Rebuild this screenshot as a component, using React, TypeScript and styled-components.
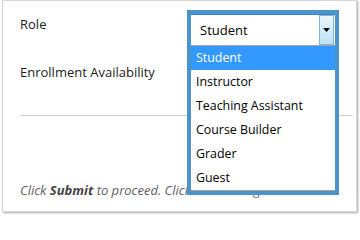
import React from 'react';
import styled, { createGlobalStyle } from 'styled-components';

const GlobalStyle = createGlobalStyle`
  html, body {
    margin: 0;
    padding: 0;
    background: #ffffff;
  }
  body {
    font-family: "Open Sans", "Noto Sans", sans-serif;
  }
`;

const roles = ['Student', 'Instructor', 'Teaching Assistant', 'Course Builder', 'Grader', 'Guest'];

const Page = styled.div`
  width: 360px;
  height: 216px;
  padding-left: 2px;
  box-sizing: border-box;
  overflow: hidden;
`;

const Panel = styled.div`
  width: 355px;
  height: 212px;
  box-sizing: border-box;
  border: 1px solid #d6d6d6;
  box-shadow: 1px 1px 2px rgba(0, 0, 0, 0.35);
  background: #fff;
  padding: 14px 3px 0 17px;
  display: flex;
  flex-direction: column;
`;

const FieldRow = styled.div`
  display: grid;
  grid-template-columns: 167px 1fr;
  height: 48px;
`;

const Label = styled.div`
  font-size: 13px;
  line-height: 18px;
  color: #222;
`;

const Control = styled.div`
  position: relative;
`;

const Divider = styled.div`
  height: 1px;
  background: #cfcfcf;
  margin-top: 4px;
`;

const Footer = styled.p`
  margin: 65px 0 0;
  font-size: 13px;
  line-height: 18px;
  font-style: italic;
  color: #5f5f66;
  white-space: nowrap;

  b {
    color: #444;
    font-weight: 700;
  }
`;

const Dropdown = styled.div`
  position: absolute;
  top: -5px;
  left: 0;
  width: 152px;
  box-sizing: border-box;
  border: 4px solid #4a93cb;
  background: #fff;
  z-index: 2;
`;

const SelectBox = styled.div`
  height: 32px;
  box-sizing: border-box;
  border-top: 1px solid #3f83bd;
  border-bottom: 1px solid #a5a5a5;
  display: flex;
  align-items: center;
  padding: 0 1px 0 9px;
  font-size: 13px;
  color: #000;
`;

const SelectValue = styled.span`
  flex: 1;
`;

const ArrowButton = styled.span`
  width: 15px;
  height: 30px;
  box-sizing: border-box;
  border: 1px solid #86b4d8;
  background: linear-gradient(#eaf6fd, #bde2f6);
  display: flex;
  align-items: center;
  justify-content: center;
`;

const Listbox = styled.ul`
  list-style: none;
  margin: 0;
  padding: 0;
  border-bottom: 1px solid #a0a0a0;
`;

const Option = styled.li<{ $active?: boolean }>`
  height: 24px;
  line-height: 24px;
  padding-left: 5px;
  font-size: 12.4px;
  color: ${({ $active }) => ($active ? '#fff' : '#000')};
  background: ${({ $active }) => ($active ? '#3399ff' : 'transparent')};
`;

export default function App() {
  return (
    <Page>
      <GlobalStyle />
      <Panel>
        <FieldRow>
          <Label>Role</Label>
          <Control>
            <Dropdown>
              <SelectBox>
                <SelectValue>Student</SelectValue>
                <ArrowButton>
                  <svg width="7" height="4" viewBox="0 0 7 4">
                    <path d="M0 0h7L3.5 4z" fill="#000" />
                  </svg>
                </ArrowButton>
              </SelectBox>
              <Listbox>
                {roles.map((r, i) => (
                  <Option key={r} $active={i === 0}>
                    {r}
                  </Option>
                ))}
              </Listbox>
            </Dropdown>
          </Control>
        </FieldRow>
        <FieldRow>
          <Label>Enrollment Availability</Label>
        </FieldRow>
        <Divider />
        <Footer>
          Click <b>Submit</b> to proceed. Click <b>Cancel</b> to go back.
        </Footer>
      </Panel>
    </Page>
  );
}
